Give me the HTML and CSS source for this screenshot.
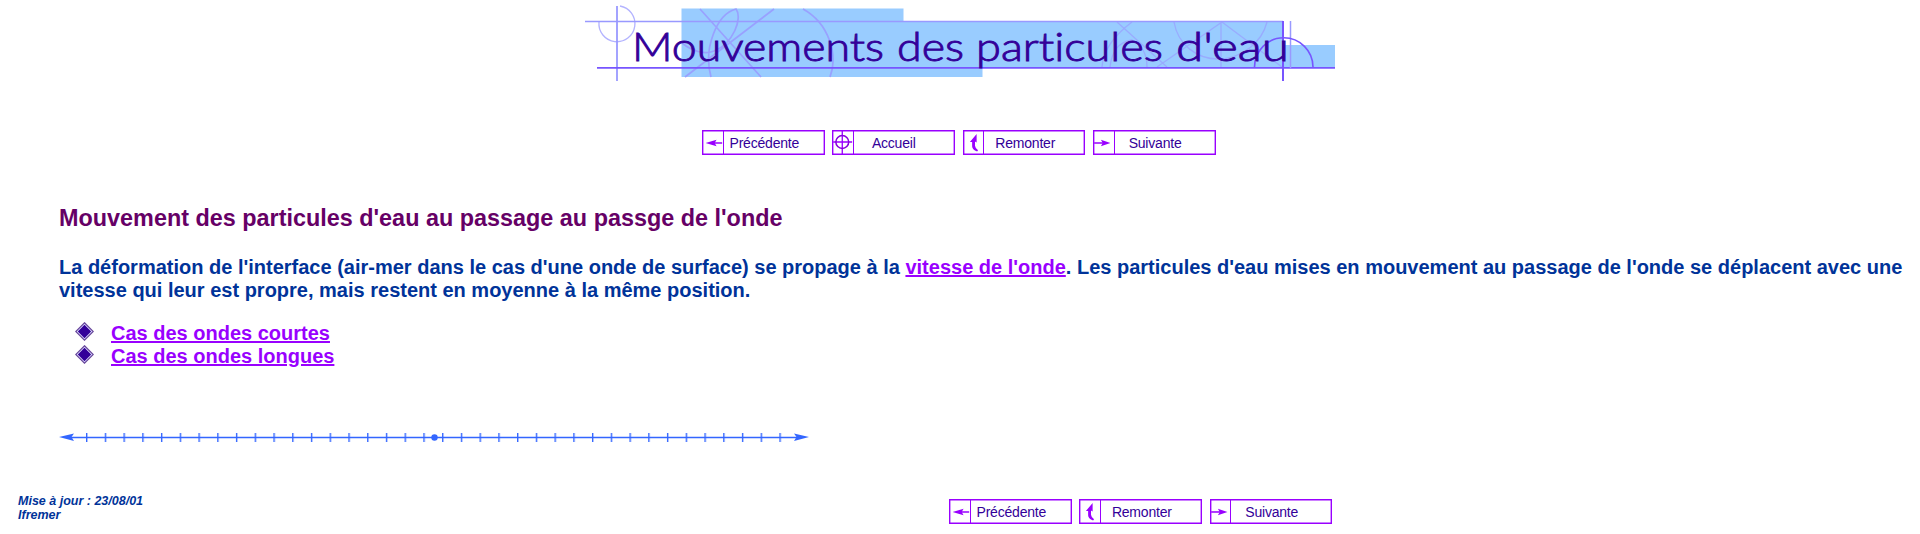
FILE: index.html
```
<!DOCTYPE html>
<html lang="fr">
<head>
<meta charset="utf-8">
<title>Mouvements des particules d'eau</title>
<link rel="stylesheet" href="styles.css">
</head>
<body>
<svg class="defs" width="0" height="0">
  <symbol id="left" viewBox="0 0 20 24"><path d="M2.500 12.500 14 9 12 12.500 14 16Z" fill="#90f"/><path d="M10 12.500H20" stroke="#90f" stroke-width="1.600"/></symbol>
  <symbol id="right" viewBox="0 0 20 24"><path d="M17 12.500 7 9 9 12.500 7 16Z" fill="#90f"/><path d="M0 12.500H10" stroke="#90f" stroke-width="1.600"/></symbol>
  <symbol id="up" viewBox="0 0 20 24"><path d="M13 3V12L11.300 11V15.500Q11.300 17.500 14.500 20L13.500 21.500Q8.300 19.500 8.300 16V11.500L6 11.500Z" fill="#90f"/></symbol>
  <symbol id="target" viewBox="0 0 20 24"><path d="M0 11.500H20M9.500 0V24" stroke="#90f" stroke-width="1.400"/><circle cx="9.500" cy="11.500" r="6.700" fill="none" stroke="#80d" stroke-width="1.600"/></symbol>
</svg>
<header>
  <svg class="banner" width="750" height="76" viewBox="585 6 750 76">
    <path d="M681.500 8.500H903.500V21H1283V45H1335V68H982.500V77H681.500Z" fill="#9cf"/>
    <g fill="none" stroke="#99f" stroke-width="1.300">
      <path d="M620 6A18 18 0 1 1 599 22" stroke-opacity=".75"/>
      <path d="M617 6V81" stroke-width="1.800"/>
      <path d="M585 21.500H1283" stroke-width="1.500"/>
      <path d="M700 9 761 77M774 9 685 77M711 77C703 48 717 14 736 9C743 18 733 44 714 51C704 55 692 51 682 43M803 9C830 24 838 56 830 77" stroke-width="1.700" stroke-opacity=".85"/>
      <path d="M1117 22 1167 67M1132 22C1112 37 1103 52 1102 67M1110 67C1112 50 1119 42 1132 40C1142 45 1147 55 1147 67M1157 67 1222 22 1282 67M1221 22V67M1174 22C1178 45 1197 59 1218 59C1242 59 1262 42 1267 22" stroke-opacity=".65"/>
    </g>
    <g fill="none" stroke="#75f">
      <path d="M597 67.800H1335" stroke-width="1.800"/>
      <path d="M1283 21V81" stroke-width="2"/>
      <path d="M1290.500 21V68" stroke="#99f" stroke-width="1.500"/>
      <path d="M1254.500 67A29 29 0 0 1 1313 67" stroke-width="1.600"/>
    </g>
    <g class="title">
      <text x="632" y="61" textLength="252" lengthAdjust="spacingAndGlyphs">Mouvements</text>
      <text x="897" y="61" textLength="67" lengthAdjust="spacingAndGlyphs">des</text>
      <text x="976" y="61" textLength="187" lengthAdjust="spacingAndGlyphs">particules</text>
      <text x="1176" y="61" textLength="113" lengthAdjust="spacingAndGlyphs">d'eau</text>
    </g>
  </svg>
</header>
<nav class="nav top">
  <a class="btn"><svg><use href="#left"/></svg><span class="prev">Précédente</span></a>
  <a class="btn"><svg><use href="#target"/></svg><span class="home">Accueil</span></a>
  <a class="btn"><svg><use href="#up"/></svg><span class="parent">Remonter</span></a>
  <a class="btn"><svg><use href="#right"/></svg><span class="next">Suivante</span></a>
</nav>
<main>
  <h3>Mouvement des particules d'eau au passage au passge de l'onde</h3>
  <p>La déformation de l'interface (air-mer dans le cas d'une onde de surface) se propage à la <a class="link">vitesse de l'onde</a>. Les particules d'eau mises en mouvement au passage de l'onde se déplacent avec une<br>vitesse qui leur est propre, mais restent en moyenne à la même position.</p>
  <ul>
    <li><svg class="bullet" viewBox="0 0 20 20"><path d="M10 .8 19.200 10 10 19.200 .8 10Z" fill="#ddf" stroke="#649" stroke-width="1.200"/><path d="M10 3 17 10 10 17 3 10Z" fill="#309"/></svg><a class="link">Cas des ondes courtes</a></li>
    <li><svg class="bullet" viewBox="0 0 20 20"><path d="M10 .8 19.200 10 10 19.200 .8 10Z" fill="#ddf" stroke="#649" stroke-width="1.200"/><path d="M10 3 17 10 10 17 3 10Z" fill="#309"/></svg><a class="link">Cas des ondes longues</a></li>
  </ul>
  <svg class="rule" width="750" height="12" viewBox="0 0 750 12">
    <defs><pattern id="ticks" x="27" y="0" width="18.740" height="12" patternUnits="userSpaceOnUse"><rect width="1.400" height="9" y="2" fill="#36f"/></pattern></defs>
    <rect x="27" width="696" height="12" fill="url(#ticks)"/>
    <path d="M10 6.500H740" stroke="#36f" stroke-width="1.300"/>
    <path d="M0 6 15 2.500 12.500 6 15 10ZM750 6 735 2.500 737.500 6 735 10Z" fill="#36f"/>
    <circle cx="375.500" cy="6.500" r="3.200" fill="#36f"/>
  </svg>
</main>
<footer>
  <div class="date">Mise à jour : 23/08/01<br>Ifremer</div>
  <nav class="nav">
    <a class="btn"><svg><use href="#left"/></svg><span class="prev">Précédente</span></a>
    <a class="btn"><svg><use href="#up"/></svg><span class="parent">Remonter</span></a>
    <a class="btn"><svg><use href="#right"/></svg><span class="next">Suivante</span></a>
  </nav>
</footer>
</body>
</html>
```
FILE: styles.css
```
* { box-sizing: border-box; }
body { margin: 0; height: 534px; overflow: hidden; background: #fff; font-family: "Liberation Sans", Arial, sans-serif; color: #039; }
.defs { display: block; height: 0; }
header { display: flex; padding: 6px 0 0 585px; }
.banner { display: block; overflow: visible; }
.title { font: 300 39.5px Lato, sans-serif; font-variant-ligatures: none; fill: #309; stroke: #309; stroke-width: .9px; }
.nav { display: flex; gap: 7.7px; }
.nav.top { padding: 48px 0 0 702px; }
.btn { display: flex; width: 122.7px; height: 25px; border: 1px solid #90f; box-shadow: inset 0 0 0 .4px #90f; color: #309; font-size: 14px; letter-spacing: -.2px; line-height: 24px; }
.btn svg { flex: none; width: 20.500px; height: 23px; border-right: 1.500px solid #90f; }
.prev { padding-left: 6px; }
.home { padding-left: 18px; }
.parent { padding-left: 11px; }
.next { padding-left: 14px; }
main { padding: 0 0 0 59px; font-weight: bold; }
h3 { margin: 49px 0 0; font-size: 23.4px; line-height: 28px; color: #606; white-space: nowrap; }
p { margin: 24px 0 0; font-size: 20px; line-height: 23px; white-space: nowrap; }
ul { margin: 20px 0 0; padding: 0 0 0 16px; list-style: none; font-size: 20px; line-height: 23px; }
li { display: flex; height: 23px; }
.bullet { width: 19px; height: 19px; margin-right: 17px; }
.link { color: #90f; text-decoration: underline; }
.rule { display: block; margin-top: 63px; }
footer { display: flex; padding: 56px 0 0 18px; }
.date { width: 931px; margin-top: -5px; font: italic bold 12.5px/14px "Liberation Sans", Arial, sans-serif; }
```
